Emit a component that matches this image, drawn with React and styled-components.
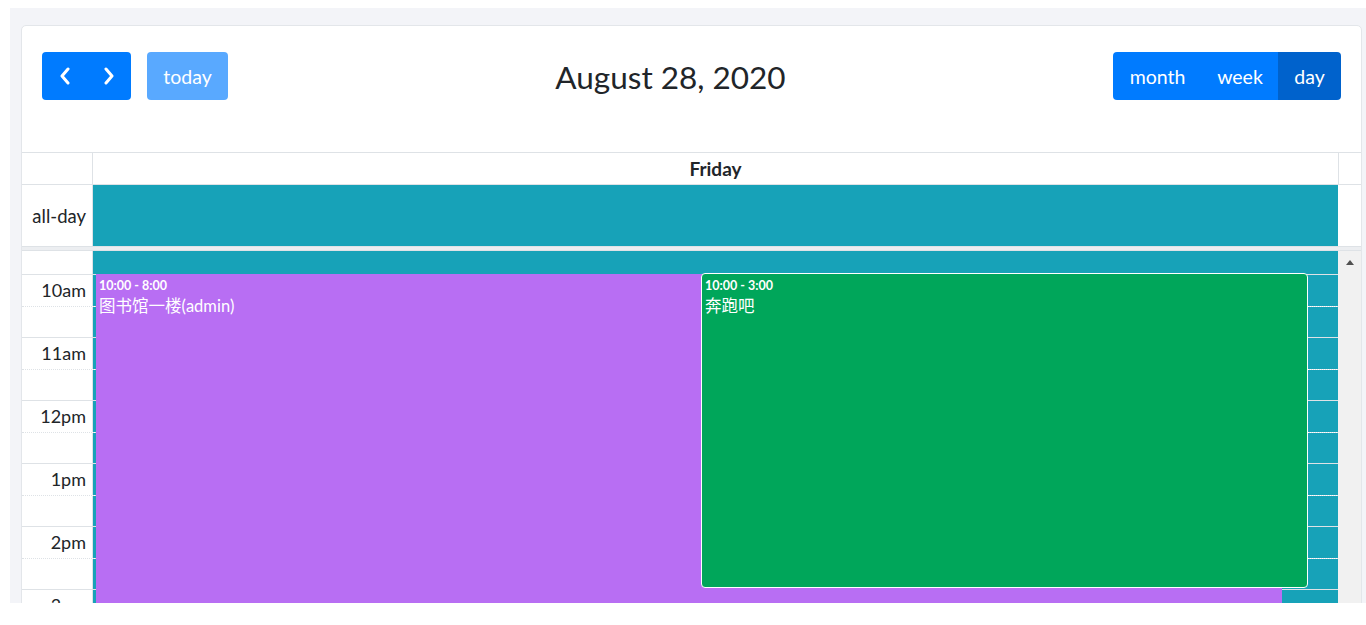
import React from "react";
import styled, { createGlobalStyle, css } from "styled-components";

const Global = createGlobalStyle`
  html, body { margin: 0; padding: 0; background: #ffffff; }
  body { font-family: Lato, "Noto Sans CJK SC", sans-serif; color: #212529; }
  * { box-sizing: border-box; }
`;

const FONT = `Lato, "Noto Sans CJK SC", sans-serif`;
const CJK = `Lato, "Noto Sans CJK SC", sans-serif`;
const TEAL = "#17a2b8";
const LINE = "#dee2e6";

const Page = styled.div`
  margin: 8px 0 0 10px;
  height: 595px;
  overflow: hidden;
  background: #f3f4f8;
  padding: 17px 4px 0 11px;
`;

const Card = styled.div`
  background: #fff;
  border: 1px solid #e3e6ea;
  border-radius: 5px;
  height: 700px;
`;

const Toolbar = styled.div`
  display: flex;
  justify-content: space-between;
  align-items: flex-start;
  padding: 26px 20px 0 20px;
  height: 126px;
`;

const Group = styled.div`
  display: flex;
  align-items: center;
  gap: ${(p) => p.$gap || 0}px;
`;

const BtnGroup = styled.div`
  display: flex;
  border-radius: 4px;
  overflow: hidden;
`;

const Button = styled.button`
  height: 48px;
  border: none;
  margin: 0;
  font-family: ${FONT};
  font-size: 19.5px;
  color: #fff;
  background: #007bff;
  padding: 0 ${(p) => p.$pad ?? 17}px;
  display: flex;
  align-items: center;
  justify-content: center;
  width: ${(p) => (p.$w ? `${p.$w}px` : "auto")};
  ${(p) =>
    p.$active &&
    css`
      background: #0062cc;
    `}
  ${(p) =>
    p.$disabled &&
    css`
      background: #59a9ff;
      border-radius: 4px;
    `}
`;

const Title = styled.h2`
  margin: 0;
  font-family: ${FONT};
  font-weight: 400;
  font-size: 31.5px;
  line-height: 50px;
  color: #212529;
`;

const Row = styled.div`
  display: flex;
  border-top: ${(p) => (p.$top ? `1px solid ${LINE}` : "none")};
  border-bottom: 1px solid ${LINE};
`;

const AxisCell = styled.div`
  width: 71px;
  flex: none;
  border-right: 1px solid ${LINE};
  text-align: right;
  padding-right: 6px;
  font-family: ${FONT};
  font-size: 18.5px;
  color: #212529;
  display: flex;
  align-items: center;
  justify-content: flex-end;
`;

const DayHead = styled.div`
  width: 1246px;
  flex: none;
  border-right: 1px solid ${LINE};
  height: 31px;
  display: flex;
  align-items: center;
  justify-content: center;
  font-family: ${FONT};
  font-weight: 700;
  font-size: 19px;
`;

const AllDayLane = styled.div`
  width: 1245px;
  flex: none;
  height: 61px;
  background: ${TEAL};
`;

const Gutter = styled.div`
  flex: 1;
`;

const Divider = styled.div`
  height: 4px;
  background: #eceef1;
  border-bottom: 1px solid ${LINE};
`;

const Body = styled.div`
  display: flex;
  height: 400px;
`;

const Grid = styled.div`
  position: relative;
  width: 1316px;
  flex: none;
`;

const Slot = styled.div`
  display: flex;
  height: ${(p) => p.$h}px;
  border-top: ${(p) =>
    p.$border === "solid"
      ? `1px solid ${LINE}`
      : p.$border === "dotted"
      ? `1px dotted ${LINE}`
      : "none"};
  box-sizing: content-box;
`;

const SlotAxis = styled.div`
  width: 71px;
  flex: none;
  border-right: 1px solid ${LINE};
  text-align: right;
  padding-right: 6px;
  font-family: ${FONT};
  font-size: 18px;
  line-height: 31px;
  color: #212529;
  background: #fff;
  white-space: nowrap;
`;

const SlotLane = styled.div`
  flex: 1;
  background: ${TEAL};
`;

const EventLayer = styled.div`
  position: absolute;
  left: 72px;
  top: 0;
  right: 0;
  bottom: 0;
`;

const Event = styled.div`
  position: absolute;
  color: #fff;
  padding: 4px 3px;
  overflow: hidden;
  border: ${(p) => (p.$outlined ? "1px solid #fff" : "none")};
  border-radius: ${(p) => (p.$outlined ? "4px" : "0")};
  background: ${(p) => p.$bg};
`;

const EventTime = styled.div`
  font-family: ${FONT};
  font-weight: 700;
  font-size: 12.5px;
  line-height: 16px;
`;

const EventTitle = styled.div`
  font-family: ${CJK};
  font-size: 16.5px;
  line-height: 24px;
`;

const Scrollbar = styled.div`
  flex: 1;
  background: #f1f1f1;
  display: flex;
  justify-content: center;
  padding-top: 9px;
`;

const Arrow = styled.div`
  width: 0;
  height: 0;
  border-left: 4px solid transparent;
  border-right: 4px solid transparent;
  border-bottom: 5px solid #505050;
`;

const Chevron = ({ dir }) => (
  <svg width="12" height="18" viewBox="0 0 12 18" fill="none">
    <polyline
      points={dir === "left" ? "9,2 3,9 9,16" : "3,2 9,9 3,16"}
      stroke="#fff"
      strokeWidth="3"
      strokeLinecap="round"
      strokeLinejoin="round"
    />
  </svg>
);

const hours = ["10am", "11am", "12pm", "1pm", "2pm", "3pm", "4pm"];

export default function App() {
  return (
    <>
      <Global />
      <Page>
        <Card>
          <Toolbar>
            <Group $gap={16}>
              <BtnGroup>
                <Button $w={45} $pad={0} aria-label="prev">
                  <Chevron dir="left" />
                </Button>
                <Button $w={44} $pad={0} aria-label="next">
                  <Chevron dir="right" />
                </Button>
              </BtnGroup>
              <Button $disabled $w={81} $pad={0}>
                today
              </Button>
            </Group>
            <Title>August 28, 2020</Title>
            <BtnGroup>
              <Button $w={89} $pad={0}>month</Button>
              <Button $w={76} $pad={0}>week</Button>
              <Button $w={63} $pad={0} $active>
                day
              </Button>
            </BtnGroup>
          </Toolbar>

          <Row $top>
            <AxisCell />
            <DayHead>Friday</DayHead>
            <Gutter />
          </Row>
          <Row>
            <AxisCell>all-day</AxisCell>
            <AllDayLane />
            <Gutter />
          </Row>
          <Divider />
          <Body>
            <Grid>
              <Slot $h={23}>
                <SlotAxis />
                <SlotLane />
              </Slot>
              {hours.map((h) => (
                <React.Fragment key={h}>
                  <Slot $h={31} $border="solid">
                    <SlotAxis>{h}</SlotAxis>
                    <SlotLane />
                  </Slot>
                  <Slot $h={30} $border="dotted">
                    <SlotAxis />
                    <SlotLane />
                  </Slot>
                </React.Fragment>
              ))}
              <EventLayer>
                <Event
                  $bg="#b86ef3"
                  style={{ left: 2, top: 23, width: 1186, height: 630 }}
                >
                  <EventTime>10:00 - 8:00</EventTime>
                  <EventTitle>图书馆一楼(admin)</EventTitle>
                </Event>
                <Event
                  $bg="#00a65a"
                  $outlined
                  style={{ left: 607, top: 22, width: 607, height: 315 }}
                >
                  <EventTime>10:00 - 3:00</EventTime>
                  <EventTitle>奔跑吧</EventTitle>
                </Event>
              </EventLayer>
            </Grid>
            <Scrollbar>
              <Arrow />
            </Scrollbar>
          </Body>
        </Card>
      </Page>
    </>
  );
}
